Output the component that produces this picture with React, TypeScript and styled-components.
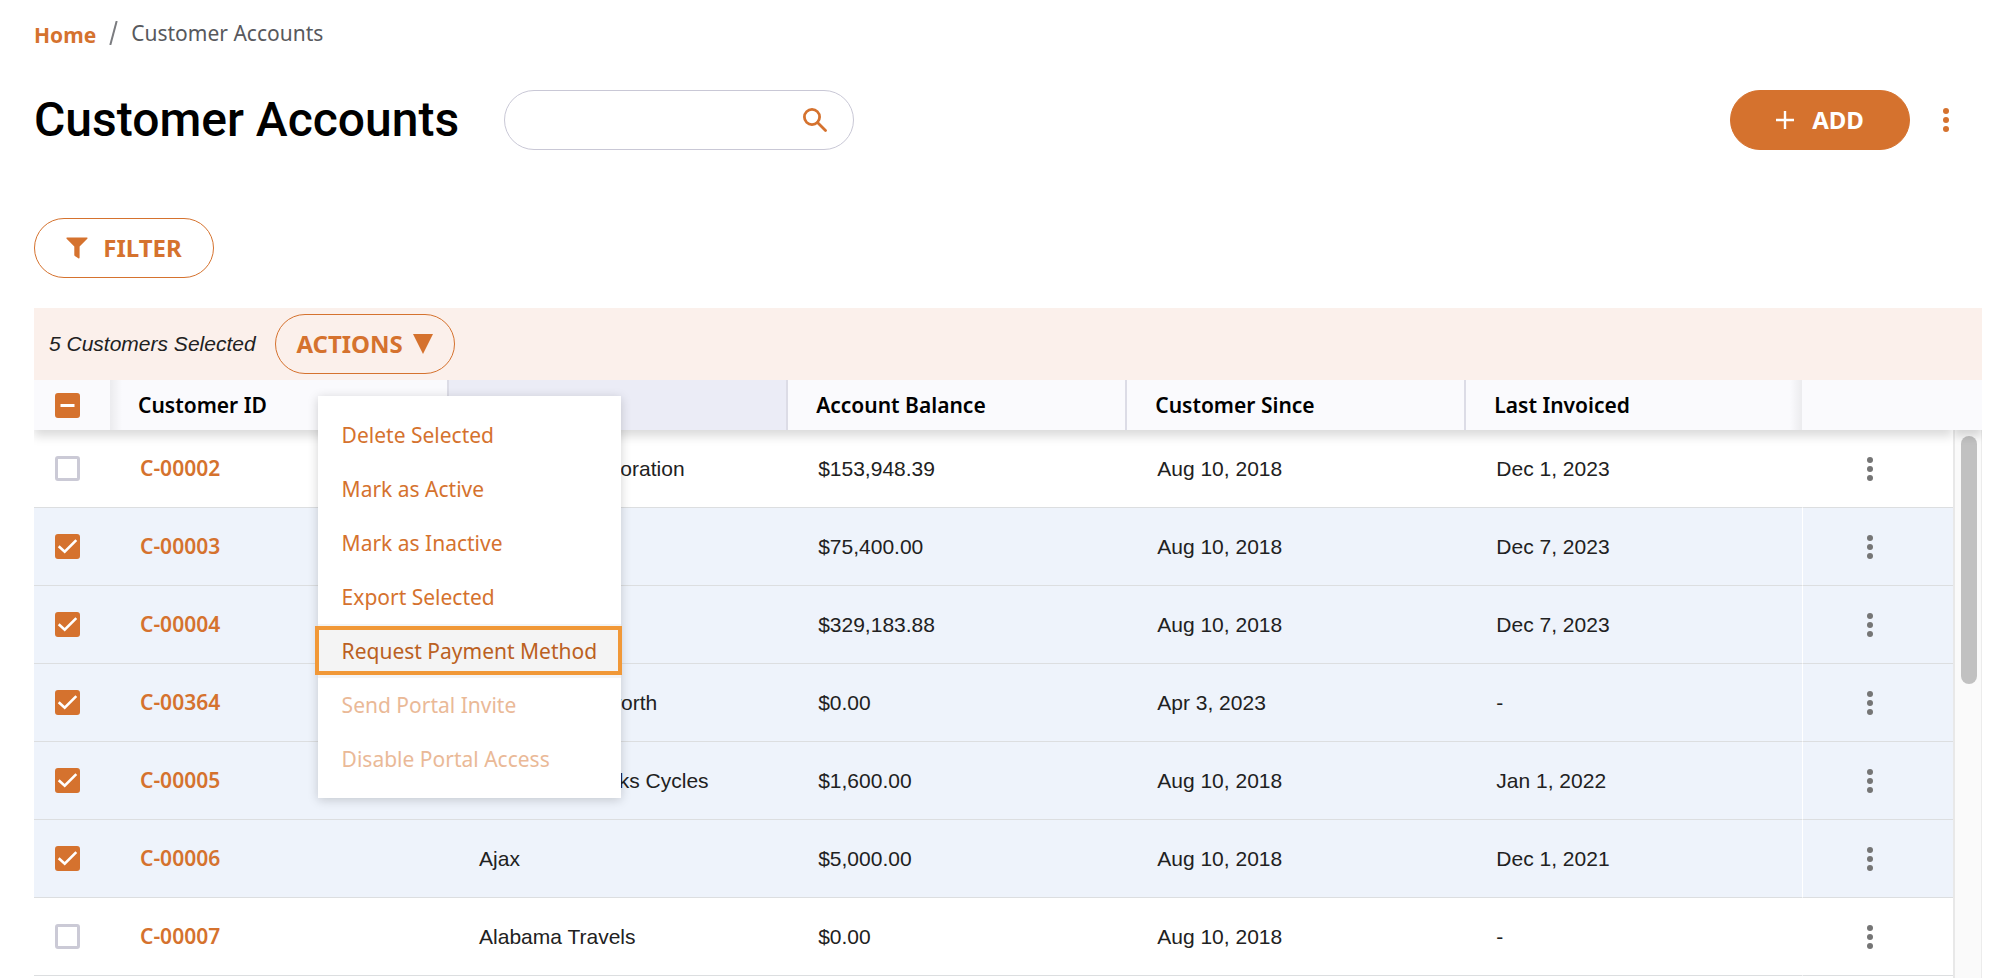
import React from 'react';
import styled, { createGlobalStyle, css } from 'styled-components';

const orange = '#d5722e';
const noto = '"Noto Sans", "Open Sans", sans-serif';
const arial = '"Liberation Sans", Arial, sans-serif';

const GlobalStyle = createGlobalStyle`
  *, *::before, *::after { box-sizing: border-box; }
  body { margin: 0; background: #fff; color: #212121; font-family: ${noto}; font-size: 21px; }
  button, input { font: inherit; }
  button { cursor: pointer; }
`;

const Page = styled.main`
  display: flex;
  flex-direction: column;
  height: 100vh;
  overflow: hidden;
  padding: 15px 18px 0 34px;

  > * { flex-shrink: 0; }
`;

const Breadcrumb = styled.nav`
  display: flex;
  align-items: center;
  gap: 13px;
  height: 36px;
  line-height: 28px;
  color: #58595d;
`;

const HomeLink = styled.a`
  color: ${orange};
  font-weight: 700;
  text-decoration: none;
  padding-top: 3px;
`;

const TitleRow = styled.header`
  display: flex;
  align-items: center;
  height: 60px;
  margin-top: 39px;
`;

const Title = styled.h1`
  margin: 0 45px 0 0;
  color: #000;
  font: 500 48px/60px Roboto, sans-serif;
`;

const SearchBox = styled.label`
  display: flex;
  align-items: center;
  width: 350px;
  height: 60px;
  padding: 0 26px 0 24px;
  border: 1px solid #c9c8d6;
  border-radius: 30px;
`;

const SearchInput = styled.input`
  flex: 1;
  min-width: 0;
  border: 0;
  outline: 0;
  background: none;
`;

const PillButton = styled.button<{ $solid?: boolean; $gap: number }>`
  display: flex;
  align-items: center;
  justify-content: center;
  gap: ${(p) => p.$gap}px;
  width: 180px;
  height: 60px;
  padding: 0;
  border: 1px solid ${orange};
  border-radius: 30px;
  background: ${(p) => (p.$solid ? orange : 'transparent')};
  color: ${(p) => (p.$solid ? '#fff' : orange)};
  font-size: 24px;
  font-weight: 700;
  line-height: 32px;
`;

const IconButton = styled.button`
  display: flex;
  align-items: center;
  justify-content: center;
  width: 32px;
  height: 40px;
  padding: 0;
  border: 0;
  background: none;
  color: inherit;
`;

const HeaderTools = styled.div`
  display: flex;
  align-items: center;
  gap: 20px;
  margin-left: auto;
  padding-right: 20px;
  color: ${orange};
`;

const FilterRow = styled.div`
  margin: 68px 0 30px;
`;

const SelectionBar = styled.div`
  display: flex;
  align-items: center;
  gap: 19px;
  height: 72px;
  padding-left: 15px;
  background: #fbf0eb;
`;

const SelectionText = styled.span`
  font: italic 21px/28px ${arial};
`;

const MenuAnchor = styled.div`
  position: relative;
  z-index: 3;
`;

const Menu = styled.ul`
  position: absolute;
  top: 82px;
  left: 43px;
  width: 303px;
  margin: 0;
  padding: 12px 0;
  list-style: none;
  background: #fff;
  box-shadow: 0 2px 10px rgba(0, 0, 0, 0.18);
`;

const MenuItem = styled.button<{ $active?: boolean }>`
  position: relative;
  display: block;
  width: 100%;
  height: 54px;
  padding: 0 24px;
  border: 0;
  background: none;
  color: ${orange};
  line-height: 28px;
  text-align: left;
  white-space: nowrap;

  &:disabled { color: #eab997; }

  ${(p) => p.$active && css`
    background: #f4f4f4;
    color: #bb6021;

    &::after {
      content: '';
      position: absolute;
      inset: 2px -1px 3px -3px;
      border: 4px solid #f19837;
    }
  `}
`;

const Grid = styled.section`
  display: flex;
  flex-grow: 1;
  align-items: stretch;
`;

const Table = styled.table`
  flex: 1;
  align-self: flex-start;
  width: 100%;
  table-layout: fixed;
  border-collapse: separate;
  border-spacing: 0;
  text-align: left;
`;

const headShadow = css`
  box-shadow: 0 6px 10px rgba(0, 0, 0, 0.15);
  clip-path: inset(0 0 -20px 0);
`;

const Thead = styled.thead`
  position: relative;
  z-index: 1;
  ${headShadow}
`;

const HeadCell = styled.th<{ $sorted?: boolean; $divider?: boolean }>`
  position: relative;
  height: 50px;
  padding: 0 28px;
  border-right: ${(p) => (p.$divider ? '2px solid #dcdce6' : '0')};
  background: ${(p) => (p.$sorted ? '#ebecf6' : '#fafafd')};
  color: #000;
  font-weight: 600;
  line-height: 28px;
`;

const PinnedHead = styled(HeadCell)<{ $side: 'left' | 'right' }>`
  padding: 0 0 0 21px;

  &::after {
    content: '';
    position: absolute;
    z-index: 1;
    top: 0;
    bottom: 0;
    ${(p) => (p.$side === 'left' ? 'left' : 'right')}: 100%;
    width: 12px;
    background: linear-gradient(
      to ${(p) => (p.$side === 'left' ? 'right' : 'left')},
      rgba(0, 0, 0, 0.06),
      transparent
    );
  }
`;

const Row = styled.tr<{ $selected: boolean }>`
  background: ${(p) => (p.$selected ? '#eef3fb' : '#fff')};
`;

const Cell = styled.td`
  height: 78px;
  padding: 0 30px;
  border-bottom: 1px solid #dcdee0;
  font-family: ${arial};
  line-height: 28px;
  white-space: nowrap;
`;

const CheckCell = styled(Cell)`
  padding: 0 0 0 21px;
`;

const MenuCell = styled(Cell)`
  padding: 0 0 0 51px;
  border-left: 1px solid #fff;
  color: #757575;
`;

const AccountLink = styled.a`
  color: ${orange};
  font-family: ${noto};
  font-weight: 600;
  text-decoration: none;
`;

const CheckWrap = styled.span`
  display: grid;
  width: 25px;
  height: 25px;

  > * { grid-area: 1 / 1; }
  svg { pointer-events: none; }
`;

const CheckInput = styled.input`
  appearance: none;
  width: 25px;
  height: 25px;
  margin: 0;
  border: 3px solid #cbcad6;
  border-radius: 3px;
  background: #fff;

  &:checked, &:indeterminate {
    border-color: ${orange};
    background: ${orange};
  }
`;

const ScrollColumn = styled.div`
  width: 29px;
  display: flex;
  flex-direction: column;
`;

const ScrollCap = styled.div`
  position: relative;
  height: 50px;
  background: #fafafd;
  ${headShadow}
`;

const ScrollTrack = styled.div`
  flex: 1;
  padding: 6px 4px 0 6px;
  border-left: 2px solid #e8e8e8;
  border-right: 1px solid #ececec;
  background: #fafafa;
`;

const ScrollThumb = styled.div`
  height: 248px;
  border-radius: 8px;
  background: #c1c1c1;
`;

const Dots = () => (
  <svg width="8" height="24" viewBox="0 0 8 24" fill="currentColor" aria-hidden="true">
    <circle cx="4" cy="3" r="3" />
    <circle cx="4" cy="12" r="3" />
    <circle cx="4" cy="21" r="3" />
  </svg>
);

const SearchIcon = () => (
  <svg width="24" height="24" viewBox="0 0 24 24" fill="none" stroke={orange} aria-hidden="true">
    <circle cx="9" cy="9" r="7.6" strokeWidth="2.8" />
    <path d="M14.5 14.5L22.5 22.5" strokeWidth="2.8" strokeLinecap="round" />
  </svg>
);

const FunnelIcon = () => (
  <svg width="22" height="22" viewBox="0 0 22 22" fill="currentColor" aria-hidden="true">
    <path d="M1 0.5H21Q22 0.6 21.3 1.8L13.6 9.6V20.6Q13.4 21.9 12.3 21.3L8.8 18.9Q8.3 18.5 8.3 17.9V9.6L0.6 1.8Q0 0.6 1 0.5Z" />
  </svg>
);

const PlusIcon = () => (
  <svg width="18" height="18" viewBox="0 0 18 18" stroke="currentColor" strokeWidth="2.4" aria-hidden="true">
    <path d="M9 0V18M0 9H18" />
  </svg>
);

const TriangleIcon = () => (
  <svg width="20" height="20" viewBox="0 0 20 20" fill="currentColor" aria-hidden="true">
    <path d="M0 0H20L10 20Z" />
  </svg>
);

const CheckBox = ({ label, checked, mixed }: { label: string; checked: boolean; mixed?: boolean }) => (
  <CheckWrap>
    <CheckInput
      type="checkbox"
      aria-label={label}
      defaultChecked={checked}
      ref={(el: HTMLInputElement | null) => {
        if (el) el.indeterminate = Boolean(mixed);
      }}
    />
    {(checked || mixed) && (
      <svg width="25" height="25" viewBox="0 0 25 25" fill="none" stroke="#fff" aria-hidden="true">
        {mixed ? (
          <path d="M5.5 12.5H19.5" strokeWidth="3" />
        ) : (
          <path d="M3.7 12.2L9.7 17.7L21.3 6.2" strokeWidth="2.6" />
        )}
      </svg>
    )}
  </CheckWrap>
);

const menuItems = [
  { label: 'Delete Selected' },
  { label: 'Mark as Active' },
  { label: 'Mark as Inactive' },
  { label: 'Export Selected' },
  { label: 'Request Payment Method', active: true },
  { label: 'Send Portal Invite', disabled: true },
  { label: 'Disable Portal Access', disabled: true },
];

const customers = [
  { id: 'C-00002', name: 'Abundant Corporation', balance: '$153,948.39', since: 'Aug 10, 2018', invoiced: 'Dec 1, 2023', selected: false },
  { id: 'C-00003', name: '', balance: '$75,400.00', since: 'Aug 10, 2018', invoiced: 'Dec 7, 2023', selected: true },
  { id: 'C-00004', name: '', balance: '$329,183.88', since: 'Aug 10, 2018', invoiced: 'Dec 7, 2023', selected: true },
  { id: 'C-00364', name: 'Adrian Wordsworth', balance: '$0.00', since: 'Apr 3, 2023', invoiced: '-', selected: true },
  { id: 'C-00005', name: 'Adventure Works Cycles', balance: '$1,600.00', since: 'Aug 10, 2018', invoiced: 'Jan 1, 2022', selected: true },
  { id: 'C-00006', name: 'Ajax', balance: '$5,000.00', since: 'Aug 10, 2018', invoiced: 'Dec 1, 2021', selected: true },
  { id: 'C-00007', name: 'Alabama Travels', balance: '$0.00', since: 'Aug 10, 2018', invoiced: '-', selected: false },
];

export default function App() {
  return (
    <Page>
      <GlobalStyle />
      <Breadcrumb aria-label="Breadcrumb">
        <HomeLink href="#home">Home</HomeLink>
        <svg width="9" height="24" viewBox="0 0 9 24" stroke="#7b7c80" strokeWidth="2" aria-hidden="true">
          <path d="M7.7 0L1.3 24" />
        </svg>
        <span>Customer Accounts</span>
      </Breadcrumb>

      <TitleRow>
        <Title>Customer Accounts</Title>
        <SearchBox>
          <SearchInput type="text" aria-label="Search customer accounts" />
          <SearchIcon />
        </SearchBox>
        <HeaderTools>
          <PillButton type="button" $solid $gap={18}>
            <PlusIcon />
            ADD
          </PillButton>
          <IconButton type="button" aria-label="More options">
            <Dots />
          </IconButton>
        </HeaderTools>
      </TitleRow>

      <FilterRow>
        <PillButton type="button" $gap={15}>
          <FunnelIcon />
          FILTER
        </PillButton>
      </FilterRow>

      <SelectionBar>
        <SelectionText>5 Customers Selected</SelectionText>
        <MenuAnchor>
          <PillButton type="button" $gap={10} aria-haspopup="true" aria-expanded="true">
            ACTIONS
            <TriangleIcon />
          </PillButton>
          <Menu>
            {menuItems.map((item) => (
              <li key={item.label}>
                <MenuItem type="button" $active={item.active} disabled={item.disabled}>
                  {item.label}
                </MenuItem>
              </li>
            ))}
          </Menu>
        </MenuAnchor>
      </SelectionBar>

      <Grid>
        <Table>
          <colgroup>
            <col style={{ width: '76px' }} />
            <col style={{ width: '17.67%' }} />
            <col style={{ width: '17.67%' }} />
            <col style={{ width: '17.67%' }} />
            <col style={{ width: '17.67%' }} />
            <col />
            <col style={{ width: '151px' }} />
          </colgroup>
          <Thead>
            <tr>
              <PinnedHead $side="left">
                <CheckBox label="Select all customers" checked={false} mixed />
              </PinnedHead>
              <HeadCell $divider>Customer ID</HeadCell>
              <HeadCell $divider $sorted>Name</HeadCell>
              <HeadCell $divider>Account Balance</HeadCell>
              <HeadCell $divider>Customer Since</HeadCell>
              <HeadCell>Last Invoiced</HeadCell>
              <PinnedHead $side="right" aria-label="Row options" />
            </tr>
          </Thead>
          <tbody>
            {customers.map((c) => (
              <Row key={c.id} $selected={c.selected}>
                <CheckCell>
                  <CheckBox label={`Select ${c.id}`} checked={c.selected} />
                </CheckCell>
                <Cell>
                  <AccountLink href={`#${c.id}`}>{c.id}</AccountLink>
                </Cell>
                <Cell>{c.name}</Cell>
                <Cell>{c.balance}</Cell>
                <Cell>{c.since}</Cell>
                <Cell>{c.invoiced}</Cell>
                <MenuCell>
                  <IconButton type="button" aria-label={`Options for ${c.id}`}>
                    <Dots />
                  </IconButton>
                </MenuCell>
              </Row>
            ))}
          </tbody>
        </Table>
        <ScrollColumn>
          <ScrollCap />
          <ScrollTrack>
            <ScrollThumb />
          </ScrollTrack>
        </ScrollColumn>
      </Grid>
    </Page>
  );
}
